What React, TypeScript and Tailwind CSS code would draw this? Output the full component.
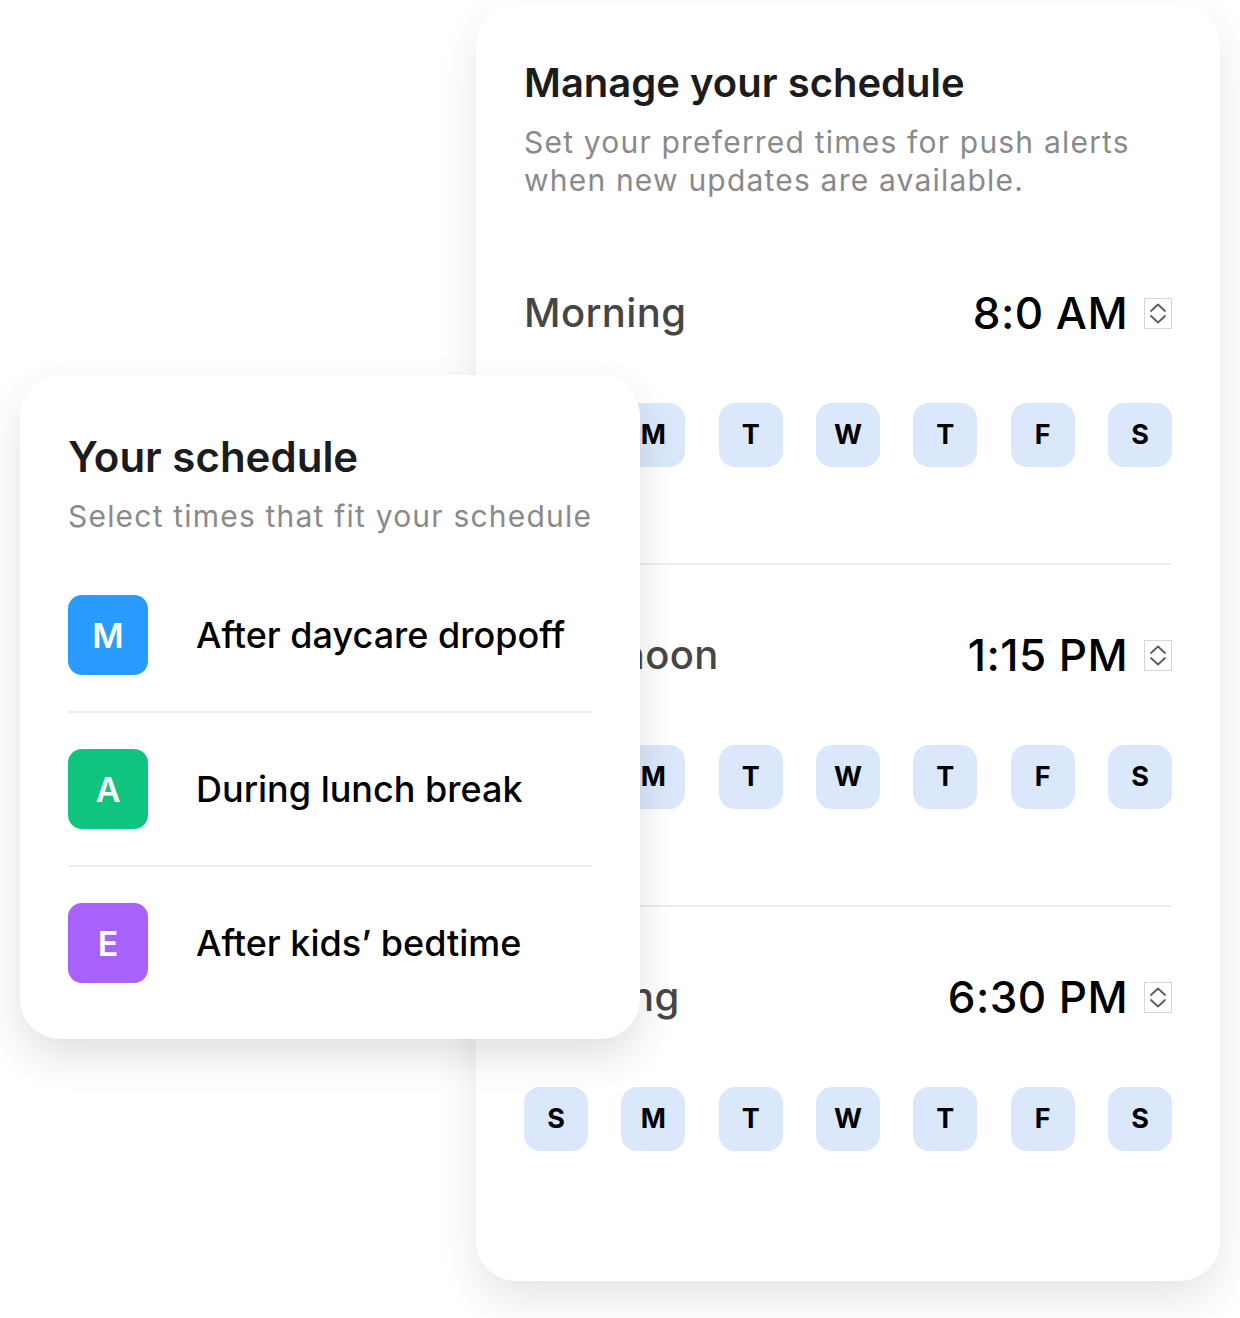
const days = ["S", "M", "T", "W", "T", "F", "S"];

const slots = [
  { label: "Morning", time: "8:0 AM" },
  { label: "Afternoon", time: "1:15 PM" },
  { label: "Evening", time: "6:30 PM" },
];

const picks = [
  { letter: "M", text: "After daycare dropoff", color: "bg-[#2a9bfe]" },
  { letter: "A", text: "During lunch break", color: "bg-[#0fc47f]" },
  { letter: "E", text: "After kids\u2019 bedtime", color: "bg-[#a862fb]" },
];

function Stepper() {
  return (
    <svg width="28" height="31" viewBox="0 0 28 31" fill="none">
      <rect x="0.5" y="0.5" width="27" height="30" fill="white" stroke="#d6d6d6" />
      <path d="M7 13 L14 6.5 L21 13" stroke="#5b5b5b" strokeWidth="1.8" strokeLinecap="round" strokeLinejoin="round" />
      <path d="M7 18 L14 24.5 L21 18" stroke="#5b5b5b" strokeWidth="1.8" strokeLinecap="round" strokeLinejoin="round" />
    </svg>
  );
}

function TimeSlot({ label, time, last }: { label: string; time: string; last: boolean }) {
  return (
    <div className={last ? "pt-[66px]" : "pt-[66px] pb-[96px] border-b-2 border-[#eeeeee]"}>
      <div className="flex h-12 items-center justify-between">
        <span className="text-[40px] leading-[48px] font-medium tracking-[0.01em] text-[#464646]">{label}</span>
        <div className="flex items-center gap-4">
          <span className="text-[44px] leading-[48px] font-medium tracking-[0.01em] text-black">{time}</span>
          <Stepper />
        </div>
      </div>
      <div className="mt-[66px] flex justify-between">
        {days.map((d, i) => (
          <button
            key={i}
            className="flex h-16 w-16 items-center justify-center rounded-2xl bg-[#dbe7fb] text-[27px] font-bold text-black"
          >
            {d}
          </button>
        ))}
      </div>
    </div>
  );
}

export default function App() {
  return (
    <div className="relative h-[1318px] w-[1240px] overflow-hidden bg-white font-['Inter','Liberation_Sans',sans-serif]">
      {/* settings card */}
      <div className="ml-[476px] mt-[5px] w-[744px] rounded-[40px] bg-white px-12 pt-[54px] pb-[130px] shadow-[0_18px_40px_rgba(0,0,0,0.10)]">
        <h2 className="text-[40px] leading-[48px] font-semibold text-[#1c1c1e]">Manage your schedule</h2>
        <p className="mt-4 mb-6 text-[30px] leading-[38px] tracking-[0.04em] text-[#8a8a8a]">
          Set your preferred times for push alerts when new updates are available.
        </p>
        {slots.map((s, i) => (
          <TimeSlot key={s.label} label={s.label} time={s.time} last={i === slots.length - 1} />
        ))}
      </div>

      {/* quick-pick card */}
      <div className="absolute left-[20px] top-[375px] w-[620px] rounded-[40px] bg-white px-12 pt-[58px] pb-5 shadow-[0_18px_40px_rgba(0,0,0,0.12)]">
        <h2 className="text-[42px] leading-[48px] font-semibold text-[#1c1c1e]">Your schedule</h2>
        <p className="mt-[17px] whitespace-nowrap text-[30px] leading-[36px] tracking-[0.04em] text-[#8a8a8a]">
          Select times that fit your schedule
        </p>
        <ul className="mt-[25px]">
          {picks.map((p, i) => (
            <li
              key={p.letter}
              className={
                i < picks.length - 1
                  ? "flex items-center gap-12 py-9 border-b-2 border-[#eeeeee]"
                  : "flex items-center gap-12 py-9"
              }
            >
              <div className={`flex h-20 w-20 shrink-0 items-center justify-center rounded-[14px] ${p.color} text-[34px] font-semibold text-white`}>
                {p.letter}
              </div>
              <span className="text-[36px] font-medium text-black">{p.text}</span>
            </li>
          ))}
        </ul>
      </div>
    </div>
  );
}
